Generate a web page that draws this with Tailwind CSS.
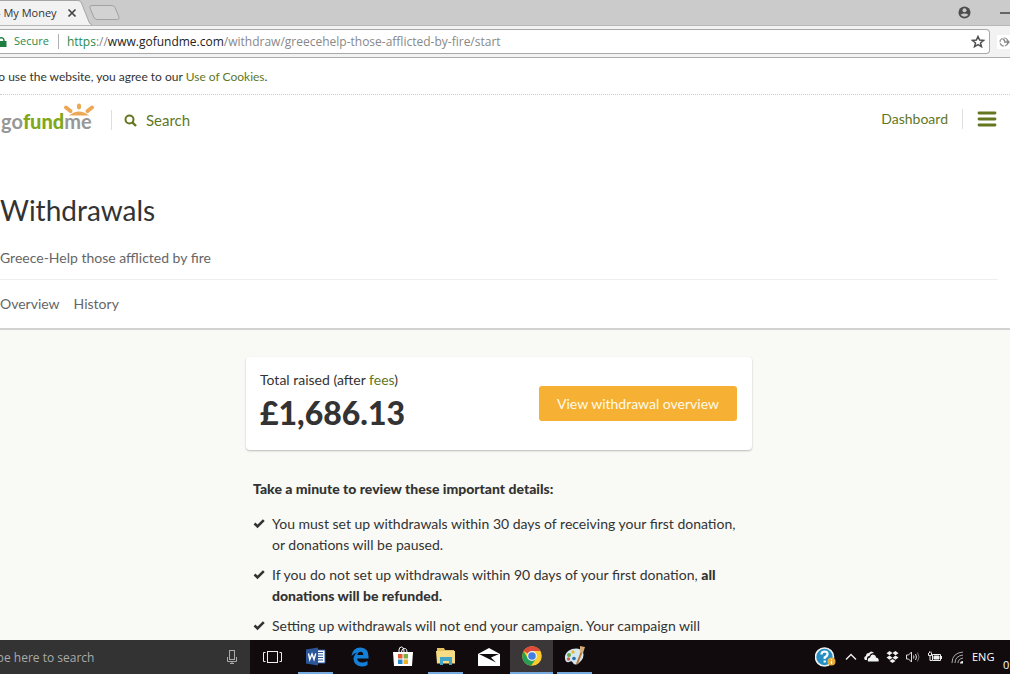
<!DOCTYPE html>
<html lang="en">
<head>
    <meta charset="UTF-8">
    <meta name="viewport" content="width=device-width, initial-scale=1.0">
    <title>My Money</title>
    <script src="https://cdn.jsdelivr.net/npm/@tailwindcss/browser@4"></script>
</head>
<body class="h-screen flex flex-col overflow-hidden bg-white font-['Lato',sans-serif] text-[#333]">

    <!-- Browser tabs -->
    <div class="h-[25px] shrink-0 flex items-center bg-[#cbcbcb] font-['Open_Sans',sans-serif] text-xs">
        <div class="relative w-[92px] h-full flex items-center">
            <svg class="absolute inset-0" width="92" height="25" viewBox="0 0 92 25" fill="none" aria-hidden="true">
                <path d="M0 .5H78Q80.500 .5 81.500 3L89 22Q90 25 92 25H0Z" fill="#f2f2f2"/>
                <path d="M0 .5H78Q80.500 .5 81.500 3L89 22Q90 24.500 92 24.500" stroke="#a5a5a5"/>
            </svg>
            <span class="relative -ml-[3px] pt-px whitespace-pre text-[11px]">- My Money</span>
            <button class="absolute left-[67px] top-2" aria-label="Close tab">
                <svg width="10" height="10" viewBox="0 0 10 10" stroke="#444" stroke-width="1.7"><path d="M1.500 1.500l7 7M8.500 1.500l-7 7"/></svg>
            </button>
        </div>
        <button class="-ml-1" aria-label="New tab">
            <svg width="32" height="17" viewBox="0 0 32 17" fill="#d2d2d2" stroke="#a2a2a2"><path d="M4 1.500H24Q26 1.500 27 3.500L31 13Q31.500 15.500 29.500 15.500H9Q7 15.500 6 13.500L2 4Q1 1.500 4 1.500Z"/></svg>
        </button>
        <div class="ml-auto flex items-center gap-[29px]">
            <button aria-label="Profile">
                <svg width="13" height="13" viewBox="0 0 13 13"><circle cx="6.500" cy="6.500" r="6" fill="#4d4d4d"/><circle cx="6.500" cy="4.300" r="2" fill="#cbcbcb"/><path d="M2.500 8.800Q6.500 6 10.500 8.800Q6.500 12.500 2.500 8.800Z" fill="#cbcbcb"/></svg>
            </button>
            <button aria-label="Minimize">
                <svg width="10" height="12" viewBox="0 0 10 12"><path d="M0 6h10" stroke="#444" stroke-width="1.500"/></svg>
            </button>
        </div>
    </div>

    <!-- Address bar -->
    <div class="h-[33px] shrink-0 flex items-center bg-[#f2f2f2] border-t border-b border-t-[#b8b8b8] border-b-[#adadad] font-['Open_Sans',sans-serif] text-xs">
        <div class="flex-1 h-[25px] flex items-center bg-white border border-l-0 border-[#a8a8a8] rounded-r-sm">
            <svg class="shrink-0" width="7" height="10" viewBox="0 0 7 10"><path d="M0 4h6.500v6H0z" fill="#1d7f42"/><path d="M0 1Q4 0 4 4" fill="none" stroke="#1d7f42" stroke-width="1.500"/></svg>
            <span class="ml-[7px] text-[11px] text-[#2a8a4c]">Secure</span>
            <span class="ml-[9px] mr-2 w-px h-[15px] bg-[#b0b0b0]"></span>
            <div role="textbox" aria-label="Address" class="flex-1 whitespace-nowrap text-xs text-[#888]"><span class="text-[#2a8a4c]">https</span>://<span class="text-[#222]">www.gofundme.com</span>/withdraw/greecehelp-those-afflicted-by-fire/start</div>
            <button class="mr-1" aria-label="Bookmark this page">
                <svg width="14" height="13" viewBox="0 0 14 13" fill="none" stroke="#505050" stroke-width="1.500"><path d="M7 1.500L8.600 5.100L12.500 5.400L9.500 7.900L10.500 11.700L7 9.600L3.500 11.700L4.500 7.900L1.500 5.400L5.400 5.100Z"/></svg>
            </button>
        </div>
        <button class="ml-[7px] w-[13px] h-[14px] shrink-0 bg-white overflow-hidden" aria-label="Extension">
            <svg width="13" height="14" viewBox="0 0 13 14" fill="none"><circle cx="7" cy="7" r="4" stroke="#999" stroke-width="1.200" stroke-dasharray="5 1"/><path d="M6 4l2 2M7 7h5M10 5l2 2-2 2" stroke="#888" stroke-width="1.500"/></svg>
        </button>
    </div>

    <!-- Cookie notice -->
    <div class="h-[37px] shrink-0 flex items-center border-b border-dotted border-[#ccd0d6] text-xs">
        <p class="-ml-[6px] pt-px whitespace-nowrap">to use the website, you agree to our <a href="#" class="text-[#62771f]">Use of Cookies</a>.</p>
    </div>

    <!-- Site header -->
    <header class="h-[50px] shrink-0 flex items-center text-[#62771f]">
        <a href="#" class="relative w-[97px] h-[34px] flex items-end pb-[6px]" aria-label="gofundme">
            <svg class="absolute left-[62px] top-0" width="34" height="13" viewBox="0 0 34 13" fill="none" stroke="#eea855" stroke-width="4" stroke-linecap="round"><path d="M17 2.500v2M4 4.500l4.500 3.500M30 4.500l-4.500 3.500"/><path d="M7 12.500Q17 4.500 27 12.500Z" fill="#eea855" stroke="none"/></svg>
            <span class="relative ml-px text-[20px] leading-5 font-bold text-[#979797]">go<span class="text-[#7fa81c] font-black">fund</span>me</span>
        </a>
        <span class="ml-[14px] w-px h-5 bg-[#dedede]"></span>
        <a href="#" class="ml-3 flex items-center gap-[9px] text-[15px]">
            <svg width="13" height="13" viewBox="0 0 13 13" fill="none" stroke="#62771f" stroke-width="2"><circle cx="5.500" cy="5.500" r="4"/><path d="M8.500 8.500l3.500 3.500" stroke-width="2.400"/></svg>
            Search
        </a>
        <div class="ml-auto mr-[13px] pb-[2px] flex items-center gap-[14px]">
            <a href="#" class="text-sm">Dashboard</a>
            <span class="w-px h-5 bg-[#dedede]"></span>
            <button aria-label="Menu">
                <svg width="20" height="16" viewBox="0 0 20 16" stroke="#62771f" stroke-width="2.800" stroke-linecap="round"><path d="M2 2h16M2 8h16M2 14h16"/></svg>
            </button>
        </div>
    </header>

    <!-- Page heading -->
    <section class="shrink-0 pt-[45px] border-b-2 border-[#d2d2d0]">
        <h1 class="text-[28px] leading-10">Withdrawals</h1>
        <p class="mt-[18px] mr-3 pb-[11px] text-sm leading-5 text-[#666] border-b border-[#eee]">Greece-Help those afflicted by fire</p>
        <nav class="h-12 flex items-center gap-[14px] text-sm text-[#666]">
            <a href="#">Overview</a>
            <a href="#">History</a>
        </nav>
    </section>

    <main class="flex-1 min-h-0 overflow-hidden bg-[#f9faf5] pt-[27px] pr-3">
        <div class="w-[506px] mx-auto">
            <div class="h-[93px] pl-[14px] pr-[15px] flex items-center justify-between bg-white rounded-sm shadow-[0_1px_2px_rgba(0,0,0,0.25)]">
                <div class="pb-[2px]">
                    <p class="text-sm leading-5">Total raised (after <a href="#" class="text-[#62771f]">fees</a>)</p>
                    <p class="text-[32px] leading-[46px] font-black">£1,686.13</p>
                </div>
                <button class="h-[35px] px-[18px] rounded-[3px] bg-[#f6b033] text-sm text-[#fffbe8]">View withdrawal overview</button>
            </div>

            <div class="mt-7 px-[7px] text-sm leading-[21px]">
                <h2 class="font-black">Take a minute to review these important details:</h2>
                <ul class="mt-[14px] flex flex-col gap-[9px]">
                    <li class="flex gap-[7px]">
                        <svg class="mt-[5px] shrink-0" width="12" height="11" viewBox="0 0 12 11" fill="none" stroke="#333" stroke-width="2.600"><path d="M1.500 5.500l3 3L10.800 2.200"/></svg>
                        <p>You must set up withdrawals within 30 days of receiving your first donation, or donations will be paused.</p>
                    </li>
                    <li class="flex gap-[7px]">
                        <svg class="mt-[5px] shrink-0" width="12" height="11" viewBox="0 0 12 11" fill="none" stroke="#333" stroke-width="2.600"><path d="M1.500 5.500l3 3L10.800 2.200"/></svg>
                        <p>If you do not set up withdrawals within 90 days of your first donation, <b class="font-black">all donations will be refunded.</b></p>
                    </li>
                    <li class="flex gap-[7px]">
                        <svg class="mt-[5px] shrink-0" width="12" height="11" viewBox="0 0 12 11" fill="none" stroke="#333" stroke-width="2.600"><path d="M1.500 5.500l3 3L10.800 2.200"/></svg>
                        <p>Setting up withdrawals will not end your campaign. Your campaign will</p>
                    </li>
                </ul>
            </div>
        </div>
    </main>

    <!-- Taskbar -->
    <footer class="h-[34px] shrink-0 flex items-stretch bg-[#110b0e] font-['Open_Sans',sans-serif] text-white overflow-hidden">
        <div class="w-[250px] flex items-center bg-[#333] overflow-hidden">
            <input type="text" aria-label="Search" placeholder="Type here to search" class="-ml-[16px] pt-[2px] flex-1 bg-transparent text-xs placeholder:text-[#aaa] outline-none">
            <button class="mr-3" aria-label="Voice search">
                <svg width="12" height="16" viewBox="0 0 12 16" fill="none" stroke="#aaa"><rect x="3.500" y="1.500" width="5" height="9"/><path d="M1.500 8v4.500h9V8M6 12.500v2.500M4 14.500h4"/></svg>
            </button>
        </div>
        <button class="w-[43px] grid place-items-center" aria-label="Task view">
            <svg width="20" height="14" viewBox="0 0 20 14" fill="none" stroke="#eee"><rect x="5.500" y="1.500" width="10" height="11"/><path d="M3.500 2.500h-2v9h2M17.500 2.500h2v9h-2"/></svg>
        </button>
        <button class="w-[45px] grid place-items-center" aria-label="Word">
            <span class="w-[35px] h-full grid place-items-center border-b-2 border-[#76a9dc]">
                <svg width="20" height="19" viewBox="0 0 20 19"><path d="M10 3h9v13h-9z" fill="#fff" stroke="#2b579a"/><path d="M12 5.500h5M12 8h5M12 10.500h5M12 13h5" stroke="#2b579a"/><path d="M0 2.500L12 .500v18L0 16.500z" fill="#2b579a"/><path d="M2.500 6.500l1.300 6L6 7l2 5.500L9.700 6.500" fill="none" stroke="#fff" stroke-width="1.400"/></svg>
            </span>
        </button>
        <button class="w-[43px] grid place-items-center" aria-label="Edge">
            <svg width="18" height="20" viewBox="0 0 18 20"><path d="M.5 9Q1.500 .5 9.500 .5Q17.500 1 17.500 9V11.500H6.200Q6.700 15.500 11 15.500Q14 15.500 16.500 14V18Q14 19.500 10.500 19.500Q3 19 2.500 12Q2.500 8 6.500 5.500Q2.500 6 .5 9ZM6.300 8H12.300Q12.300 4.700 9.500 4.700Q6.800 5 6.300 8Z" fill="#1480d8" fill-rule="evenodd"/></svg>
        </button>
        <button class="w-[43px] grid place-items-center" aria-label="Store">
            <svg width="20" height="22" viewBox="0 0 20 22"><path d="M6 7V4Q6 1 8.500 1Q11 1 11 6M8.500 6Q9 2 11.500 2.500Q14 2 14 7" fill="none" stroke="#fff"/><path d="M0 6h20l-1 14H1z" fill="#fff"/><path d="M5 8h4.500v4.500H5z" fill="#e25a32"/><path d="M10.500 8H15v4.500h-4.500z" fill="#7bb13b"/><path d="M5 13.500h4.500V18H5z" fill="#248acc"/><path d="M10.500 13.500H15V18h-4.500z" fill="#efb32b"/></svg>
        </button>
        <button class="w-[43px] grid place-items-center" aria-label="File Explorer">
            <span class="w-[35px] h-full grid place-items-center border-b-2 border-[#76a9dc]">
                <svg width="20" height="17" viewBox="0 0 20 17"><path d="M1 0h7l1 2h9v2H1z" fill="#e5c25d"/><path d="M0 3h19v12.500H1z" fill="#f6dc84"/><path d="M4 9h12v8h-3v-4H7v4H4z" fill="#40a5c9"/></svg>
            </span>
        </button>
        <button class="w-[43px] grid place-items-center" aria-label="Mail">
            <svg width="22" height="18" viewBox="0 0 22 18"><path d="M0 6L11 0l11 6v12H0z" fill="#fff"/><path d="M1 6h20L13 9.500l5 5L8 9.500z" fill="#110b0e"/></svg>
        </button>
        <button class="w-[43px] grid place-items-center bg-[#3b3638] border-b-2 border-[#76a9dc]" aria-label="Chrome">
            <svg width="20" height="20" viewBox="0 0 20 20"><circle cx="10" cy="10" r="9.800" fill="#fbcb30"/><path d="M10 10L1.500 5.100A9.800 9.800 0 0 1 18.500 5.100H10z" fill="#df4b3a"/><path d="M1.500 5.100A9.800 9.800 0 0 0 9 19.700L14.200 12.500 10 10 5.800 12.500z" fill="#269f55"/><circle cx="10" cy="10" r="4.900" fill="#f3f3f3"/><circle cx="10" cy="10" r="3.800" fill="#427fe0"/></svg>
        </button>
        <button class="w-[43px] grid place-items-center" aria-label="Paint">
            <span class="w-[35px] h-full grid place-items-center border-b-2 border-[#76a9dc]">
                <svg width="22" height="20" viewBox="0 0 22 20"><path d="M1 13Q0 6 8 3Q16 1 19 6Q21 12 15 17Q11 20 9 17Q8 14 5 16Q2 17 1 13Z" fill="#d4e6ef"/><circle cx="5" cy="9" r="2" fill="#65a944"/><circle cx="9" cy="6" r="1.700" fill="#e3ba3b"/><circle cx="4.500" cy="13" r="1.700" fill="#d45a43"/><circle cx="10" cy="12.500" r="1.800" fill="#276eac"/><path d="M18 5l-5 13" stroke="#b97836" stroke-width="2"/><path d="M16 0l5 1-2 6-3-1z" fill="#d5ad72"/></svg>
            </span>
        </button>

        <!-- System tray -->
        <div class="ml-auto flex items-center">
            <svg class="mr-[9px]" width="21" height="20" viewBox="0 0 21 20"><circle cx="9.500" cy="10" r="9" fill="#238fc5" stroke="#f2f2f2" stroke-width="1.600"/><path d="M6.500 7.500Q6.500 4.500 9.700 4.500Q12.800 4.700 12.500 7.500Q12.300 9 9.700 10.500V12M9.700 13.500v2" fill="none" stroke="#fff" stroke-width="2.200"/><circle cx="16.500" cy="14.500" r="4" fill="#e9ac3b"/><path d="M16.500 12v1M16.500 14v3" stroke="#fff" stroke-width="1.200"/></svg>
            <svg class="mr-[7px]" width="12" height="12" viewBox="0 0 12 12" fill="none" stroke="#eee" stroke-width="1.400"><path d="M1 8.500l5-5 5 5"/></svg>
            <svg class="mr-[7px]" width="15" height="12" viewBox="0 0 15 12" fill="#f2f2f2"><path d="M1 9Q-1 6 2 5Q2 2 5 2Q7-1 10 2Q6 2 5.500 5Q2.500 5 3 9Z"/><path d="M4 10.500Q3 7 6 6.500Q7 2.500 10.500 4Q12 4.500 12 6.500Q15.500 7 14.500 10.500Z"/></svg>
            <svg class="mr-[7px]" width="13" height="12" viewBox="0 0 13 12" fill="#f2f2f2"><path d="M3.500 0l3 2-3 2.200L.5 2.200zM9.500 0l3 2.200-3 2-3-2.200zM3.500 4.600l3 2.200-3 2-3-2.200zM9.500 4.600l3 2-3 2.200-3-2zM6.500 8l3 2-3 2-3-2z"/></svg>
            <svg class="mr-[8px]" width="14" height="12" viewBox="0 0 14 12" fill="none" stroke="#ddd"><path d="M.5 4v4h2l3 3V1l-3 3zM7.500 4.500q1 1.500 0 3M9.500 3q2 3 0 6"/><path d="M11.500 1.500q3 4.500 0 9" stroke="#777"/></svg>
            <svg class="mr-[9px]" width="14" height="12" viewBox="0 0 14 12" fill="none" stroke="#eee"><path d="M4.500 3.500h8v6h-8z"/><path d="M6 5h5v3H6z" fill="#eee"/><path d="M13.500 5v3M.5 2v2.500h3V2M1.500 .5v1.500M3 .5v1.500M2 5v4.500h2"/></svg>
            <svg class="mr-[8px]" width="13" height="13" viewBox="0 0 13 13" fill="none" stroke="#aaa"><path d="M1 12Q1 2 12 1M4 12Q4 5 12 4M7 12Q7 8 12 7"/><path d="M9 12.500Q9 10 12 10v2.500z" fill="#eee" stroke="none"/></svg>
            <span class="w-[31px] text-[11px]">ENG</span>
            <span class="w-[7px] self-end pb-[1px] text-[11px] leading-4 whitespace-nowrap">05</span>
        </div>
    </footer>
</body>
</html>
